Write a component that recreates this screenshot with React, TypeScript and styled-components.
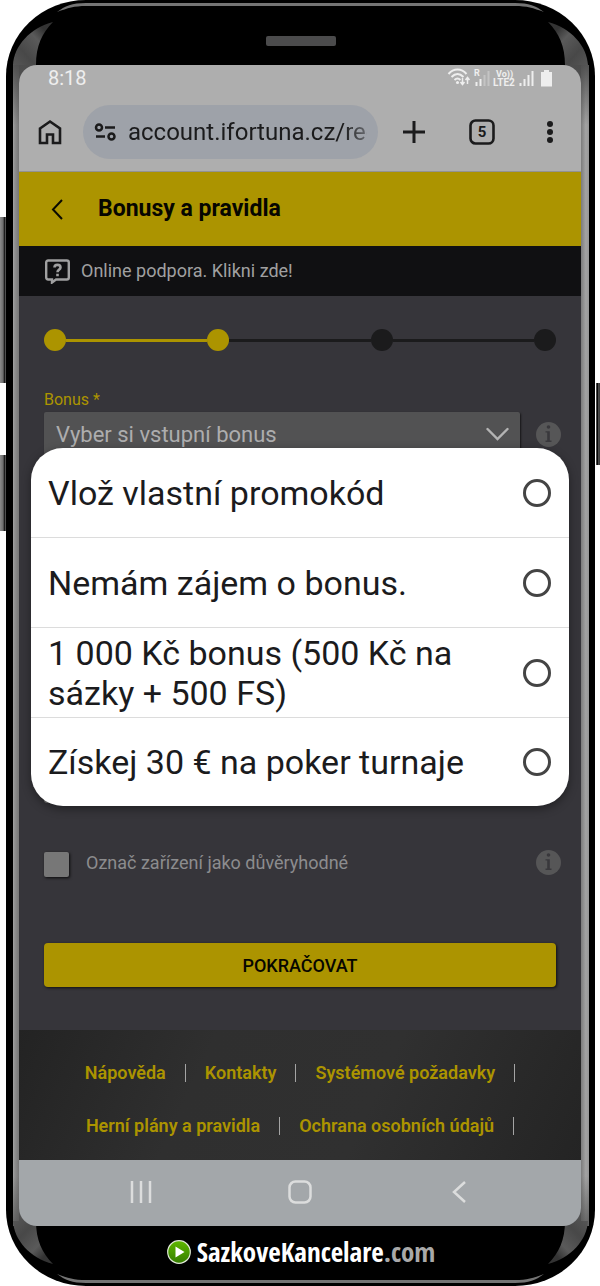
import React from "react";
import styled, { createGlobalStyle } from "styled-components";

const color = {
  gold: "#ac9400",
  panel: "#36353a",
  field: "#525253",
  chrome: "#aeaeae",
  ink: "#1b1b1c",
  muted: "#8c8c8e",
};

const GlobalStyle = createGlobalStyle`
  * { box-sizing: border-box; }
  body { margin: 0; background: #fff; font-family: Roboto, "Liberation Sans", sans-serif; }
  button, input, select { font-family: inherit; margin: 0; }
  svg { display: block; flex: none; }
`;

const Stage = styled.div`
  position: relative;
  padding: 0 5px 0 6px;
  overflow: hidden;
`;

const SideKey = styled.span<{ $side: "left" | "right"; $top: number; $length: number }>`
  position: absolute;
  top: ${(p) => p.$top}px;
  ${(p) => p.$side}: 0;
  width: ${(p) => (p.$side === "left" ? 6 : 4)}px;
  height: ${(p) => p.$length}px;
  background: ${(p) =>
    p.$side === "left"
      ? "linear-gradient(90deg, #8c8c8c, #6e6e6e 50%, #1c1c1c 75%, #6a6a6a)"
      : "linear-gradient(90deg, #6a6a6a, #000 40%, #4c4c4c 60%, #3a3a3a)"};
`;

const Phone = styled.div`
  position: relative;
  background: #000;
  border-radius: 80px / 76px;
  overflow: hidden;
  padding: 0 6px 0 7px;
`;

const EdgeLight = styled.span<{ $edge: "top" | "bottom" }>`
  position: absolute;
  ${(p) => p.$edge}: 3px;
  left: 80px;
  right: 80px;
  height: 3px;
  background: #747474;
`;

const CornerSvg = styled.svg<{ $right?: boolean; $bottom?: boolean }>`
  position: absolute;
  ${(p) => (p.$right ? "right" : "left")}: 0;
  ${(p) => (p.$bottom ? "bottom" : "top")}: 0;
  transform: scale(${(p) => (p.$right ? -1 : 1)}, ${(p) => (p.$bottom ? -1 : 1)});
`;

const TopBezel = styled.div`
  height: 65px;
  display: flex;
  justify-content: center;
  padding-top: 36px;
`;

const Speaker = styled.span`
  width: 70px;
  height: 10px;
  border-radius: 2px;
  background: #4b4b4c;
`;

const MidFrame = styled.div`
  padding: 0 8px 0 6px;
  background:
    linear-gradient(rgba(74, 74, 74, 0.9), rgba(74, 74, 74, 0)) top / 100% 60px no-repeat,
    linear-gradient(rgba(74, 74, 74, 0), rgba(74, 74, 74, 0.7)) bottom / 100% 50px no-repeat,
    linear-gradient(90deg, #a3a3a3, #8f8f8f 30%, #777 100%) left / 6px 100% no-repeat,
    linear-gradient(90deg, #7c7c7c, #a3a3a3 60%, #969696) right / 8px 100% no-repeat,
    #5c5c5c;
`;

const Screen = styled.div`
  position: relative;
  border-radius: 18px;
  overflow: hidden;
  background: ${color.panel};
`;

const StatusBar = styled.div`
  height: 28px;
  padding: 0 28px 2px 29px;
  display: flex;
  align-items: center;
  justify-content: space-between;
  background: ${color.chrome};
  color: #eee;
  font-size: 20px;
  line-height: 24px;
`;

const BrowserBar = styled.div`
  height: 79px;
  padding: 0 17px;
  display: flex;
  align-items: center;
  background: ${color.chrome};
  border-bottom: 1px solid #929292;
`;

const IconButton = styled.button`
  border: 0;
  padding: 0;
  background: none;
  color: ${color.ink};
  display: flex;
  align-items: center;
  justify-content: center;
  width: 28px;
  height: 40px;
`;

const AddressPill = styled.label`
  flex: 1;
  min-width: 0;
  height: 54px;
  margin: 0 22px 0 19px;
  padding: 0 11px;
  border-radius: 27px;
  background: #9ea2a9;
  display: flex;
  align-items: center;
  gap: 11px;
  color: ${color.ink};
`;

const AddressInput = styled.input`
  flex: 1;
  min-width: 0;
  border: 0;
  padding: 0;
  background: none;
  color: ${color.ink};
  font-size: 24px;
  line-height: 32px;
  mask-image: linear-gradient(90deg, #000 90%, rgba(0, 0, 0, 0.4));
`;

const BarActions = styled.div`
  display: flex;
  gap: 40px;
`;

const TitleBar = styled.header`
  height: 74px;
  padding: 0 24px;
  display: flex;
  align-items: center;
  gap: 27px;
  background: ${color.gold};
`;

const Title = styled.h1`
  margin: 0;
  font-size: 23px;
  line-height: 28px;
  font-weight: 700;
  color: #060600;
`;

const SupportLink = styled.a`
  height: 50px;
  padding: 0 26px;
  display: flex;
  align-items: center;
  gap: 11px;
  background: #101012;
  color: #a0a0a1;
  font-size: 18px;
  line-height: 24px;
  text-decoration: none;
`;

const Form = styled.form`
  padding: 33px 20px 43px 25px;
`;

const Steps = styled.ol`
  list-style: none;
  margin: 0 5px 40px 0;
  padding: 0;
  display: flex;
  align-items: center;
`;

const Step = styled.li<{ $done?: boolean }>`
  width: 22px;
  height: 22px;
  border-radius: 50%;
  background: ${(p) => (p.$done ? color.gold : color.ink)};
`;

const StepLine = styled.li<{ $done?: boolean }>`
  flex: 1;
  height: 3px;
  background: ${(p) => (p.$done ? color.gold : color.ink)};
`;

const FieldLabel = styled.label`
  display: block;
  margin-bottom: 3px;
  font-size: 16px;
  line-height: 18px;
  color: ${color.gold};
`;

const FieldRow = styled.div`
  display: flex;
  align-items: center;
  gap: 16px;
`;

const SelectBox = styled.div`
  flex: 1;
  min-width: 0;
  height: 44px;
  padding-right: 11px;
  display: flex;
  align-items: center;
  background: ${color.field};
  border-radius: 2px;
  box-shadow: 1px 1px 2px rgba(0, 0, 0, 0.6);
  color: #b4b4b4;
`;

const Select = styled.select`
  flex: 1;
  min-width: 0;
  height: 44px;
  padding: 0 12px;
  border: 0;
  appearance: none;
  background: none;
  color: #adadae;
  font-size: 22px;
`;

const CodeInput = styled.input`
  display: block;
  width: calc(100% - 41px);
  height: 44px;
  margin: 303px 0 47px;
  border: 0;
  border-radius: 3px;
  background: #777;
`;

const Trust = styled.div`
  display: flex;
  align-items: flex-start;
  justify-content: space-between;
  height: 27px;
  margin-bottom: 66px;
`;

const TrustLabel = styled.label`
  display: flex;
  gap: 17px;
  font-size: 18px;
  line-height: 25px;
  color: ${color.muted};
`;

const TickBox = styled.input`
  appearance: none;
  align-self: flex-end;
  width: 25px;
  height: 25px;
  && { margin-top: 2px; }
  border-radius: 2px;
  background: #777;
  box-shadow: 1px 1px 3px rgba(0, 0, 0, 0.8);
`;

const InfoButton = styled.button`
  width: 25px;
  height: 25px;
  padding: 0;
  border: 0;
  border-radius: 50%;
  background: #565657;
`;

const Submit = styled.button`
  display: block;
  width: calc(100% - 5px);
  height: 44px;
  border: 0;
  border-radius: 4px;
  background: ${color.gold};
  box-shadow: 1px 1px 3px rgba(0, 0, 0, 0.7);
  color: #070600;
  font-size: 18px;
  font-weight: 500;
`;

const Footer = styled.footer`
  padding: 32px 60px 23px;
  display: flex;
  flex-wrap: wrap;
  justify-content: center;
  gap: 31px 19px;
  background: linear-gradient(115deg, #232323, #2f2f2f 32%, #303030 62%, #242424);
`;

const FooterItem = styled.span`
  display: flex;
  align-items: center;
  height: 22px;
  gap: 19px;

  &::after {
    content: "";
    width: 1px;
    height: 18px;
    background: #a4a4a4;
  }
`;

const FooterLink = styled.a`
  color: ${color.gold};
  font-size: 18px;
  line-height: 22px;
  font-weight: 600;
  text-decoration: none;
  white-space: nowrap;
`;

const SystemNav = styled.nav`
  height: 66px;
  padding: 0 42px 2px;
  display: grid;
  grid-template-columns: repeat(3, 1fr);
  place-items: center;
  background: #a3a7aa;

  button { color: #dcdddd; }
`;

const Dialog = styled.fieldset`
  position: absolute;
  top: 383px;
  left: 12px;
  right: 12px;
  margin: 0;
  padding: 0;
  border: 0;
  border-radius: 32px;
  background: #fff;
  box-shadow: 0 3px 10px rgba(0, 0, 0, 0.4);
`;

const Option = styled.label`
  min-height: 90px;
  padding: 0 18px 0 17px;
  display: flex;
  align-items: center;
  justify-content: space-between;
  gap: 50px;
  border-bottom: 1px solid #dcdcdc;
  color: #1b1b1d;
  font-size: 34px;
  line-height: 40px;

  &:last-child { min-height: 88px; border-bottom: 0; }
`;

const Radio = styled.input`
  appearance: none;
  flex: none;
  width: 28px;
  height: 28px;
  border: 3px solid #444;
  border-radius: 50%;
`;

const BottomBezel = styled.div`
  height: 60px;
  padding-bottom: 8px;
  display: flex;
  align-items: center;
  justify-content: center;
  gap: 6px;
`;

const Brand = styled.a`
  color: #fff;
  font-family: "Open Sans Condensed", "Liberation Sans Narrow", "Open Sans", sans-serif;
  font-size: 27px;
  line-height: 30px;
  font-weight: 700;
  text-decoration: none;

  span { color: #a9a9a9; }
`;

const Corner = ({ id, right, bottom }: { id: string; right?: boolean; bottom?: boolean }) => (
  <CornerSvg $right={right} $bottom={bottom} width="80" height="65" viewBox="0 0 80 65" aria-hidden="true">
    <defs>
      <linearGradient id={id} x1="0" y1="1" x2="0.8" y2="0.2">
        <stop offset="0" stopColor="#565656" />
        <stop offset="0.35" stopColor="#484848" />
        <stop offset="0.75" stopColor="#5a5a5a" />
        <stop offset="1" stopColor="#333" />
      </linearGradient>
    </defs>
    <path d="M7 65C8 46 24 28 47 22C36 33 30 46 30 65Z" fill={`url(#${id})`} />
    <path d="M51 12C59 6 66 3 80 3V6C68 6 62 8 51 12Z" fill="#747474" />
  </CornerSvg>
);

const InfoGlyph = () => (
  <svg width="25" height="25" viewBox="0 0 25 25" fill="#39383c" aria-hidden="true">
    <circle cx="12.5" cy="5" r="1.8" />
    <path d="M9.500 9.200H13.800V18.600H15.500V20H9.500V18.600H11.200V10.600H9.500Z" />
  </svg>
);

const StatusIcons = () => (
  <svg width="106" height="20" viewBox="0 0 106 20" fill="none" stroke="#eee" aria-label="Wi-Fi, LTE, battery">
    <g strokeWidth="2">
      <path d="M1.500 6C6.500 0 14.500 0 19.500 6" />
      <path d="M4.500 9C8.500 5 12.500 5 16.500 9" />
      <path d="M7.500 12C9.500 10 11.500 10 13.500 12" />
    </g>
    <circle cx="10.500" cy="14.500" r="1.500" fill="#eee" stroke="none" />
    <path d="M15.500 10V16M13.500 14L15.500 16.500L17.500 14M20.500 16V10M18.500 12L20.500 9.500L22.500 12" strokeWidth="1.500" />
    <path d="M29.500 14V18M33.500 11V18" strokeWidth="2" />
    <path d="M37.500 7V18M41.500 3V18" strokeWidth="2" stroke="#c4c4c4" />
    <g fill="#eee" stroke="none" fontFamily="Roboto, sans-serif" fontWeight="700">
      <text x="27" y="8" fontSize="9">R</text>
      <text x="49" y="9" fontSize="9">Vo))</text>
      <text x="46" y="18" fontSize="10">LTE2</text>
    </g>
    <path d="M73.500 15V18M77.500 11V18M81.500 7V18M85.500 3V18" strokeWidth="2" />
    <path d="M94 4H97V2H102V4H105V18.500H94Z" fill="#eee" stroke="none" />
  </svg>
);

const bonuses = [
  "Vlož vlastní promokód",
  "Nemám zájem o bonus.",
  "1 000 Kč bonus (500 Kč na sázky + 500 FS)",
  "Získej 30 € na poker turnaje",
];

const footerLinks = [
  "Nápověda",
  "Kontakty",
  "Systémové požadavky",
  "Herní plány a pravidla",
  "Ochrana osobních údajů",
];

export default function App() {
  return (
    <>
      <GlobalStyle />
      <Stage>
        <SideKey $side="left" $top={217} $length={166} />
        <SideKey $side="left" $top={455} $length={76} />
        <SideKey $side="right" $top={383} $length={82} />
        <Phone>
          <EdgeLight $edge="top" />
          <EdgeLight $edge="bottom" />
          <Corner id="tl" />
          <Corner id="tr" right />
          <Corner id="bl" bottom />
          <Corner id="br" right bottom />

          <TopBezel>
            <Speaker />
          </TopBezel>

          <MidFrame>
            <Screen>
              <StatusBar>
                <span>8:18</span>
                <StatusIcons />
              </StatusBar>

              <BrowserBar>
                <IconButton type="button" aria-label="Domů">
                  <svg width="24" height="26" viewBox="0 0 24 26" fill="none" stroke="currentColor" strokeWidth="2.600">
                    <path d="M2 9.500L12 2.500L22 9.500V24H15V15.500H9V24H2Z" />
                  </svg>
                </IconButton>
                <AddressPill>
                  <svg width="23" height="20" viewBox="0 0 23 20" fill="none" stroke="currentColor" strokeWidth="2.500">
                    <circle cx="5" cy="5.500" r="3" />
                    <path d="M11 5.500H21M2 14.500H11" />
                    <circle cx="17.500" cy="14.500" r="3" />
                  </svg>
                  <AddressInput aria-label="Adresa" defaultValue="account.ifortuna.cz/registrace" />
                </AddressPill>
                <BarActions>
                  <IconButton type="button" aria-label="Nová karta">
                    <svg width="24" height="24" viewBox="0 0 24 24" fill="none" stroke="currentColor" strokeWidth="3">
                      <path d="M12 1V23M1 12H23" />
                    </svg>
                  </IconButton>
                  <IconButton type="button" aria-label="Karty">
                    <svg width="26" height="26" viewBox="0 0 26 26">
                      <rect x="1.500" y="1.500" width="23" height="23" rx="5" fill="none" stroke="currentColor" strokeWidth="2.600" />
                      <text x="13" y="18" textAnchor="middle" fontSize="15" fontWeight="700" fontFamily="Roboto, sans-serif" fill="currentColor">
                        5
                      </text>
                    </svg>
                  </IconButton>
                  <IconButton type="button" aria-label="Nabídka">
                    <svg width="8" height="24" viewBox="0 0 8 24" fill="currentColor">
                      <circle cx="4" cy="4" r="3" />
                      <circle cx="4" cy="12" r="3" />
                      <circle cx="4" cy="20" r="3" />
                    </svg>
                  </IconButton>
                </BarActions>
              </BrowserBar>

              <TitleBar>
                <IconButton type="button" aria-label="Zpět">
                  <svg width="14" height="22" viewBox="0 0 14 22" fill="none" stroke="#0a0a00" strokeWidth="2">
                    <path d="M12 2L3 11.500L12 21" />
                  </svg>
                </IconButton>
                <Title>Bonusy a pravidla</Title>
              </TitleBar>

              <SupportLink href="#podpora">
                <svg width="25" height="25" viewBox="0 0 25 25" fill="none" stroke="currentColor" strokeWidth="2.400">
                  <path d="M3.200 1.500H21.800Q23.800 1.500 23.800 3.500V18.500Q23.800 20.500 21.800 20.500H11L7 23.500V20.500H3.200Q1.200 20.500 1.200 18.500V3.500Q1.200 1.500 3.200 1.500Z" />
                  <path d="M9.500 8.500C9.500 5 15.500 5 15.500 8.500C15.500 10.800 12.500 10.500 12.500 13.200M12.500 14.800V17.200" strokeWidth="2.600" />
                </svg>
                Online podpora. Klikni zde!
              </SupportLink>

              <Form>
                <Steps>
                  <Step $done />
                  <StepLine $done />
                  <Step $done />
                  <StepLine />
                  <Step />
                  <StepLine />
                  <Step />
                </Steps>

                <FieldLabel htmlFor="bonus">Bonus *</FieldLabel>
                <FieldRow>
                  <SelectBox>
                    <Select id="bonus">
                      <option>Vyber si vstupní bonus</option>
                    </Select>
                    <svg width="23" height="14" viewBox="0 0 23 14" fill="none" stroke="currentColor" strokeWidth="2.400" strokeLinecap="round">
                      <path d="M1.500 2L11.500 12L21.500 2" />
                    </svg>
                  </SelectBox>
                  <InfoButton type="button" aria-label="Informace o bonusu">
                    <InfoGlyph />
                  </InfoButton>
                </FieldRow>

                <CodeInput type="text" aria-label="Promokód" />

                <Trust>
                  <TrustLabel>
                    <TickBox type="checkbox" />
                    Označ zařízení jako důvěryhodné
                  </TrustLabel>
                  <InfoButton type="button" aria-label="Informace o zařízení">
                    <InfoGlyph />
                  </InfoButton>
                </Trust>

                <Submit type="button">POKRAČOVAT</Submit>
              </Form>

              <Footer>
                {footerLinks.map((text) => (
                  <FooterItem key={text}>
                    <FooterLink href="#info">{text}</FooterLink>
                  </FooterItem>
                ))}
              </Footer>

              <SystemNav>
                <IconButton type="button" aria-label="Poslední aplikace">
                  <svg width="22" height="22" viewBox="0 0 22 22" fill="none" stroke="currentColor" strokeWidth="2.500">
                    <path d="M2 0V22M11 0V22M20 0V22" />
                  </svg>
                </IconButton>
                <IconButton type="button" aria-label="Plocha">
                  <svg width="24" height="24" viewBox="0 0 24 24" fill="none" stroke="currentColor" strokeWidth="2.500">
                    <rect x="1.500" y="1.500" width="21" height="21" rx="6" />
                  </svg>
                </IconButton>
                <IconButton type="button" aria-label="Zpět">
                  <svg width="14" height="22" viewBox="0 0 14 22" fill="none" stroke="currentColor" strokeWidth="2.500">
                    <path d="M13 1L2 11L13 21" />
                  </svg>
                </IconButton>
              </SystemNav>

              <Dialog aria-label="Vyber si vstupní bonus">
                {bonuses.map((text) => (
                  <Option key={text}>
                    {text}
                    <Radio type="radio" name="bonus-option" />
                  </Option>
                ))}
              </Dialog>
            </Screen>
          </MidFrame>

          <BottomBezel>
            <svg width="24" height="24" viewBox="0 0 24 24" aria-hidden="true">
              <defs>
                <linearGradient id="play" x1="0" y1="0" x2="0" y2="1">
                  <stop offset="0" stopColor="#5fb800" />
                  <stop offset="1" stopColor="#357d00" />
                </linearGradient>
              </defs>
              <circle cx="12" cy="12" r="11.300" fill="url(#play)" stroke="#dfe8d6" strokeWidth="1.200" />
              <path d="M8.500 6.500L17.500 12L8.500 17.500Z" fill="#fff" />
            </svg>
            <Brand href="#sazkovekancelare">
              SazkoveKancelare<span>.com</span>
            </Brand>
          </BottomBezel>
        </Phone>
      </Stage>
    </>
  );
}
